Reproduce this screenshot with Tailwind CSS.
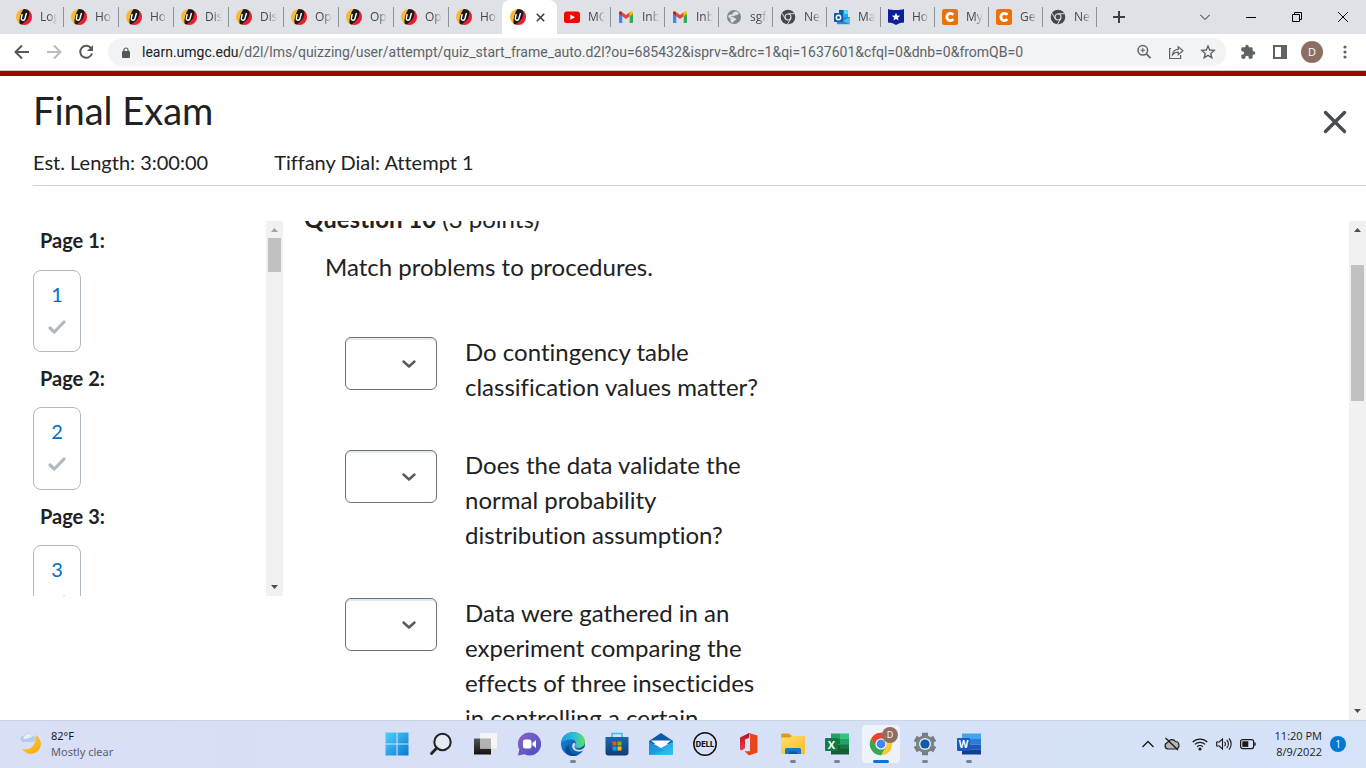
<!DOCTYPE html>
<html lang="en">
<head>
<meta charset="utf-8">
<title>Final Exam</title>
<script src="https://cdn.jsdelivr.net/npm/@tailwindcss/browser@4"></script>
</head>
<body class="flex h-screen flex-col overflow-hidden bg-white font-['Lato',sans-serif] text-[#202122] [font-variant-ligatures:none]">

<svg class="absolute size-0" aria-hidden="true">
  <defs>
    <clipPath id="disc"><circle cx="8" cy="8" r="8"/></clipPath>
    <linearGradient id="winG" x1="0" y1="0" x2="1" y2="1"><stop offset="0" stop-color="#4fd0fb"/><stop offset="1" stop-color="#0a78d2"/></linearGradient>
    <linearGradient id="chatG" x1="0" y1="0" x2="1" y2="1"><stop offset="0" stop-color="#8a63c9"/><stop offset="1" stop-color="#4a4fbd"/></linearGradient>
    <linearGradient id="edgeA" x1="0" y1="0" x2="1" y2="0"><stop offset="0" stop-color="#1b9de2"/><stop offset=".6" stop-color="#2fc2cf"/><stop offset="1" stop-color="#66e04f"/></linearGradient>
    <linearGradient id="edgeB" x1="0" y1="0" x2="1" y2="1"><stop offset="0" stop-color="#1288dc"/><stop offset="1" stop-color="#0f4f9e"/></linearGradient>
    <linearGradient id="storeG" x1="0" y1="0" x2="0" y2="1"><stop offset="0" stop-color="#1668b4"/><stop offset="1" stop-color="#173c6f"/></linearGradient>
    <linearGradient id="mailG" x1="0" y1="0" x2="1" y2="1"><stop offset="0" stop-color="#1a8fdc"/><stop offset="1" stop-color="#35c3f2"/></linearGradient>
    <linearGradient id="foldG" x1="0" y1="0" x2="1" y2="1"><stop offset="0" stop-color="#ffdf70"/><stop offset="1" stop-color="#fabb25"/></linearGradient>
    <linearGradient id="offG" x1="0" y1="0" x2="0" y2="1"><stop offset="0" stop-color="#b3121d"/><stop offset="1" stop-color="#e8404a"/></linearGradient>
    <linearGradient id="moonG" x1="0" y1="0" x2="1" y2="1"><stop offset="0" stop-color="#ffd23d"/><stop offset="1" stop-color="#f9a60e"/></linearGradient>
    <linearGradient id="darkG" x1="0" y1="0" x2="0" y2="1"><stop offset="0" stop-color="#555"/><stop offset="1" stop-color="#111"/></linearGradient>
    <symbol id="umgc" viewBox="0 0 16 16">
      <g clip-path="url(#disc)">
        <path fill="#fbb831" d="M0 0h16v16H0z"/>
        <path fill="#ee1c3a" d="M13 3 16 1v15H6l2-3c3-1 5-5 5-10z"/>
        <path fill="#1d1a19" d="M7.500 0 13 0 13.500 3c0 5-2 8.500-5.500 10.500L5.500 16 3.500 15C3 10 4.500 4 7.500 0z"/>
        <path fill="none" stroke="#fff" stroke-width="1.400" d="M6.200 5 5.300 9.300c-.3 2.200 3 2.800 3.600.5L10.500 4"/>
      </g>
    </symbol>
    <symbol id="youtube" viewBox="0 0 16 16"><rect y="2.500" width="16" height="11.500" rx="2.500" fill="#f00"/><path fill="#fff" d="M6.300 5.600 11 8.200l-4.700 2.600z"/></symbol>
    <symbol id="gmail" viewBox="0 0 16 16">
      <path fill="#4285f4" d="M1 3.500v9.500q0 1 1 1h2.300V6.500z"/><path fill="#34a853" d="M15 3.500v9.500q0 1-1 1h-2.300V6.500z"/>
      <path fill="#ea4335" d="M4.300 3.300 8 6.100l3.700-2.800v4L8 10.100 4.300 7.300z"/>
      <path fill="#c5221f" d="M1 4.800V3.700C1 2 2.800 1.500 4.300 3.300v4z"/><path fill="#fbbc04" d="M15 4.800V3.700C15 2 13.200 1.500 11.700 3.300v4z"/>
    </symbol>
    <symbol id="globe" viewBox="0 0 16 16"><circle cx="8" cy="8" r="7" fill="#80868b"/><path fill="#dee1e6" d="M7 3.500 10 2.300l3 1.700c-.5 2-1.500 1.300-2.500 2-.5.800-2 0-2.500 1.200H4.500c.5 1 2.500.6 3.500 1.400.3 1.200 2.300.4 2 1.700-.6 1.700-2.500 1.400-3 3.400L4.500 13V9.600L2.200 8l.5-2c1.500-.5 3-.3 4-1z"/></symbol>
    <symbol id="chromeGrey" viewBox="0 0 16 16"><circle cx="8" cy="8" r="7.300" fill="#44484c"/><path stroke="#dee1e6" stroke-width="1" fill="none" d="M8 4.700h6.500M5.200 9.700 2 4.200M10.800 9.700 7.600 15"/><circle cx="8" cy="8" r="3.500" fill="#dee1e6"/><circle cx="8" cy="8" r="2.400" fill="#44484c"/></symbol>
    <symbol id="outlook" viewBox="0 0 16 16"><path fill="#28a8ea" d="M5 1h9v8H5z"/><path fill="#50d9ff" d="M9.500 1H14v4H9.500z"/><path fill="#0f5fae" d="M5 1h4.500v4H5z"/><path fill="#1490df" d="M3 8h13v7.200H3z"/><path fill="#50b8f5" d="m16 8-7 4 7 3.200z"/><rect y="4" width="9" height="9" rx=".8" fill="#0f5ca8"/><circle cx="4.500" cy="8.500" r="2.200" fill="none" stroke="#fff" stroke-width="1.400"/></symbol>
    <symbol id="shield" viewBox="0 0 16 16"><path fill="#0b1e9b" d="M0 0c2 1 4 .5 5.500 1h5C12 .5 14 1 16 0v13.500L12 14l-4 2-4-2-4-.5z"/><path fill="#fff" d="m8 3.800 1.200 2.700 2.900.3-2.200 1.900.7 2.900L8 10.100l-2.600 1.500.7-2.900-2.200-1.900 2.900-.3z"/></symbol>
    <symbol id="chegg" viewBox="0 0 16 16"><rect width="16" height="16" rx="2.500" fill="#eb7100"/><path fill="none" stroke="#fff" stroke-width="2.800" d="M11.300 5.800A3.600 3.600 0 1 0 11.300 10.200"/></symbol>
    <symbol id="check" viewBox="0 0 18 14"><path fill="none" stroke="#b1b9be" stroke-width="3.200" stroke-linecap="round" stroke-linejoin="round" d="m2 8 4.300 4L16 2"/></symbol>
    <symbol id="chev" viewBox="0 0 16 10"><path fill="none" stroke="#565a5c" stroke-width="2.400" stroke-linecap="round" stroke-linejoin="round" d="m2.500 2.500 5.500 5 5.500-5"/></symbol>
    <symbol id="up" viewBox="0 0 7 4"><path fill="currentColor" d="M3.500 0 7 4H0z"/></symbol>
    <symbol id="down" viewBox="0 0 7 4"><path fill="currentColor" d="M0 0h7L3.500 4z"/></symbol>
  </defs>
</svg>

<!-- Tab strip -->
<header class="shrink-0 font-['Open_Sans','Noto_Sans',sans-serif]">
  <div class="flex h-[34px] items-center bg-[#dee1e6] pl-[9px] text-xs text-[#45494d]">
    <nav id="tabs" class="flex h-full items-center" aria-label="Tabs"></nav>
    <button class="ml-4 size-3" aria-label="New tab"><svg viewBox="0 0 12 12" class="size-3"><path d="M6 0v12M0 6h12" stroke="#3c4043" stroke-width="2"/></svg></button>
    <div class="ml-auto flex h-7 items-center">
      <button class="grid h-full w-[46px] place-items-center" aria-label="Search tabs"><svg viewBox="0 0 10 6" class="h-[6px] w-[10px]"><path d="m0 .5 5 5 5-5" fill="none" stroke="#222"/></svg></button>
      <button class="grid h-full w-[46px] place-items-center" aria-label="Minimize"><svg viewBox="0 0 10 10" class="size-[10px]"><path d="M0 5.500h10" stroke="#000"/></svg></button>
      <button class="grid h-full w-[46px] place-items-center" aria-label="Restore"><svg viewBox="0 0 10 10" class="size-[10px]"><path d="M.5 2.500h7v7h-7zM2.500 2.500v-2h7v7h-2" fill="none" stroke="#000"/></svg></button>
      <button class="grid h-full w-[46px] place-items-center" aria-label="Close window"><svg viewBox="0 0 10 10" class="size-[10px]"><path d="m0 0 10 10M10 0 0 10" stroke="#000"/></svg></button>
    </div>
  </div>

  <!-- Toolbar -->
  <div class="flex h-9 items-center bg-white pr-[13px] pl-[14px] text-[#5f6368]">
    <button class="mr-4 size-4" aria-label="Back"><svg viewBox="0 0 16 16" class="size-4" fill="none" stroke="#55595d" stroke-width="2"><path d="M15 8H2M8 1.500 1.500 8 8 14.500"/></svg></button>
    <button class="mr-4 size-4" aria-label="Forward"><svg viewBox="0 0 16 16" class="size-4" fill="none" stroke="#babcbe" stroke-width="2"><path d="M1 8h13M8 1.500 14.500 8 8 14.500"/></svg></button>
    <button class="mr-[14px] size-4" aria-label="Reload"><svg viewBox="0 0 16 16" class="size-4"><path d="M13.300 4.500A6 6 0 1 0 14 9.500" fill="none" stroke="#55595d" stroke-width="2"/><path d="M15 1v6H9z" fill="#55595d"/></svg></button>
    <div class="flex h-7 min-w-0 flex-1 items-center rounded-full bg-[#f1f3f4] px-[14px]">
      <svg viewBox="0 0 8 11" class="h-[11px] w-2 shrink-0"><rect y="4" width="8" height="7" rx="1" fill="#55595d"/><path d="M2 4.500V3a2 2 0 0 1 4 0v1.500" fill="none" stroke="#55595d" stroke-width="1.200"/></svg>
      <div class="ml-3 min-w-0 flex-1 overflow-hidden font-['Roboto',sans-serif] text-sm whitespace-nowrap"><span class="text-[#202124]">learn.umgc.edu</span>/d2l/lms/quizzing/user/attempt/quiz_start_frame_auto.d2l?ou=685432&amp;isprv=&amp;drc=1&amp;qi=1637601&amp;cfql=0&amp;dnb=0&amp;fromQB=0</div>
      <button class="mr-4 size-4" aria-label="Zoom"><svg viewBox="0 0 16 16" class="size-4" fill="none" stroke="#5f6368" stroke-width="1.500"><circle cx="6.800" cy="6.300" r="4.800"/><path d="m10.500 10 4 4.200" stroke-width="1.800"/><path d="M4.500 6.300h4.600M6.800 4v4.600" stroke-width="1.100"/></svg></button>
      <button class="mr-4 size-4" aria-label="Share"><svg viewBox="0 0 16 16" class="size-4" fill="none" stroke="#5f6368" stroke-width="1.200"><path d="M3 4.500H1.600v10h11V11"/><path d="M4.500 10.800C5 7.500 7 5.500 10.200 5.400V2.700L15 6.800l-4.800 4V8.200C7.800 8.200 6 9 4.500 10.800z"/></svg></button>
      <button class="-mr-[4px] size-4" aria-label="Bookmark"><svg viewBox="0 0 16 16" class="size-4" fill="none" stroke="#5f6368" stroke-width="1.400"><path d="m8 2 1.700 4 4.500.4-3.400 3 1 4.300L8 11.400l-3.800 2.300 1-4.300-3.400-3L6.300 6z"/></svg></button>
    </div>
    <button class="ml-[14px] size-4" aria-label="Extensions"><svg viewBox="0 0 24 24" class="size-4" fill="#5f6368"><path d="M20.500 11H19V7a2 2 0 0 0-2-2h-4V3.500a2.500 2.500 0 0 0-5 0V5H4a2 2 0 0 0-2 2v3.800h1.500a2.700 2.700 0 0 1 0 5.400H2V20a2 2 0 0 0 2 2h3.800v-1.500a2.700 2.700 0 0 1 5.400 0V22H17a2 2 0 0 0 2-2v-4h1.500a2.500 2.500 0 0 0 0-5z"/></svg></button>
    <button class="ml-4 size-4" aria-label="Side panel"><svg viewBox="0 0 16 16" class="size-4"><path fill="#5f6368" fill-rule="evenodd" d="M1 1h14v14H1zm2 2v10h6V3z"/></svg></button>
    <button class="ml-[13px] size-[22px] rounded-full bg-[#8d6e63] text-[11px] leading-[22px] text-white" aria-label="Profile">D</button>
    <button class="ml-[14px] size-4" aria-label="Menu"><svg viewBox="0 0 16 16" class="size-4" fill="#5f6368"><circle cx="8" cy="3" r="1.600"/><circle cx="8" cy="8" r="1.600"/><circle cx="8" cy="13" r="1.600"/></svg></button>
  </div>
</header>

<!-- Quiz page -->
<div class="h-[6px] shrink-0 border-t border-[#c9cbcd] bg-[#9e0505]"></div>
<section class="ml-[33px] shrink-0 border-b border-[#cdd5dc] pt-[9px] pb-2">
  <div class="flex items-start justify-between pr-[19px]">
    <h1 class="mt-[2px] text-[38px] leading-[46px]">Final Exam</h1>
    <button class="mt-[25px] size-6" aria-label="Close"><svg viewBox="0 0 24 24" class="size-6"><path d="m2.500 2.500 19 19M21.500 2.500l-19 19" stroke="#494c4e" stroke-width="3.400" stroke-linecap="round"/></svg></button>
  </div>
  <div class="flex gap-[66px] pt-[13px] text-[20px] leading-[30px]">
    <p>Est. Length: 3:00:00</p>
    <p>Tiffany Dial: Attempt 1</p>
  </div>
</section>

<main class="flex min-h-0 flex-1 pt-[35px]">
  <aside class="ml-[33px] flex h-[375px] w-[250px] shrink-0 overflow-hidden">
    <div class="flex-1 text-[20px]">
      <h2 class="pt-1 pl-[7px] leading-[30px] font-bold">Page 1:</h2>
      <a href="#q1" class="mt-[15px] flex h-[82px] w-12 flex-col items-center rounded-lg border border-[#b1b9be] pt-2 leading-[30px] text-[#006fbf]">1<svg class="mt-[11px] h-[14px] w-[18px]"><use href="#check"/></svg></a>
      <h2 class="mt-[11px] pl-[7px] leading-[30px] font-bold">Page 2:</h2>
      <a href="#q2" class="mt-[14px] flex h-[83px] w-12 flex-col items-center rounded-lg border border-[#b1b9be] pt-2 leading-[30px] text-[#006fbf]">2<svg class="mt-[11px] h-[14px] w-[18px]"><use href="#check"/></svg></a>
      <h2 class="mt-[11px] pl-[7px] leading-[30px] font-bold">Page 3:</h2>
      <a href="#q3" class="mt-[14px] flex h-[83px] w-12 flex-col items-center rounded-lg border border-[#b1b9be] pt-2 leading-[30px] text-[#006fbf]">3<svg class="mt-[11px] h-[14px] w-[18px]"><use href="#check"/></svg></a>
    </div>
    <div class="flex w-[17px] flex-col items-center bg-[#f1f1f1] py-[7px]">
      <svg class="h-1 w-[7px] shrink-0 text-[#a3a3a3]"><use href="#up"/></svg>
      <div class="mt-[6px] h-[34px] w-[13px] bg-[#c1c1c1]"></div>
      <svg class="mt-auto h-1 w-[7px] shrink-0 text-[#505050]"><use href="#down"/></svg>
    </div>
  </aside>

  <div class="flex min-w-0 flex-1 overflow-hidden">
    <div class="min-w-0 flex-1 pl-[21px] text-[24px] leading-[35px]">
      <h2 class="-mt-[20px]"><b>Question 10</b> (3 points)</h2>
      <p class="pt-[13px] pl-[21px]">Match problems to procedures.</p>
      <div class="flex flex-col gap-[43px] pt-[50px] pl-[41px]">
        <div class="flex gap-7">
          <div class="relative mt-[3px] h-[53px] w-[92px] shrink-0"><select aria-labelledby="m1" class="size-full appearance-none rounded-md border border-[#6e7376] bg-white shadow-[inset_0_2px_0_#e3e9f1]"><option></option></select><svg class="pointer-events-none absolute top-[22px] right-5 h-[10px] w-4"><use href="#chev"/></svg></div>
          <p id="m1" class="max-w-[304px]">Do contingency table classification values matter?</p>
        </div>
        <div class="flex gap-7">
          <div class="relative mt-[3px] h-[53px] w-[92px] shrink-0"><select aria-labelledby="m2" class="size-full appearance-none rounded-md border border-[#6e7376] bg-white shadow-[inset_0_2px_0_#e3e9f1]"><option></option></select><svg class="pointer-events-none absolute top-[22px] right-5 h-[10px] w-4"><use href="#chev"/></svg></div>
          <p id="m2" class="max-w-[304px]">Does the data validate the normal probability distribution assumption?</p>
        </div>
        <div class="flex gap-7">
          <div class="relative mt-[3px] h-[53px] w-[92px] shrink-0"><select aria-labelledby="m3" class="size-full appearance-none rounded-md border border-[#6e7376] bg-white shadow-[inset_0_2px_0_#e3e9f1]"><option></option></select><svg class="pointer-events-none absolute top-[22px] right-5 h-[10px] w-4"><use href="#chev"/></svg></div>
          <p id="m3" class="max-w-[304px]">Data were gathered in an experiment comparing the effects of three insecticides in controlling a certain</p>
        </div>
      </div>
    </div>
    <div class="flex w-[17px] shrink-0 flex-col items-center bg-[#f1f1f1] py-[7px]">
      <svg class="h-1 w-[7px] shrink-0 text-[#505050]"><use href="#up"/></svg>
      <div class="mt-[33px] h-[136px] w-[13px] bg-[#c1c1c1]"></div>
      <svg class="mt-auto h-1 w-[7px] shrink-0 text-[#505050]"><use href="#down"/></svg>
    </div>
  </div>
</main>

<!-- Taskbar -->
<footer class="grid h-12 shrink-0 grid-cols-[1fr_auto_1fr] items-center border-t border-[#c9d4e8] bg-linear-to-r from-[#d8dff6] to-[#d5e2f8] pb-px font-['Open_Sans','Noto_Sans',sans-serif] text-[11px] leading-4 text-[#1b1b1b]">
  <div class="flex items-center gap-[9px] pl-5 font-['Noto_Sans',sans-serif]">
    <svg viewBox="0 0 22 24" class="h-6 w-[22px]"><path fill="url(#moonG)" d="M15.500 3A10 10 0 1 1 2 16.500c5 2.500 15 0 13.500-13.500z"/><path fill="#b5cbe9" d="M3.500 10a3 3 0 0 1 .3-6A4.500 4.500 0 0 1 12 4a3 3 0 0 1 .5 6z"/><path fill="#e8f0fb" d="M3.500 7a3 3 0 0 1 1-3A4.500 4.500 0 0 1 12 4c-1 2-5 3-8.500 3z"/></svg>
    <p>82°F<br><span class="text-[#5b6070]">Mostly clear</span></p>
  </div>

  <nav class="flex h-full items-center" aria-label="Taskbar">
    <button class="grid h-full w-11 place-items-center" aria-label="Start"><svg viewBox="0 0 24 24" class="size-6"><path fill="url(#winG)" d="M.5.5h11v11H.5zM12.500.5h11v11h-11zM.5 12.500h11v11H.5zM12.500 12.500h11v11h-11z"/></svg></button>
    <button class="grid h-full w-11 place-items-center" aria-label="Search"><svg viewBox="0 0 24 24" class="size-6" fill="none" stroke="#222"><circle cx="13.500" cy="10" r="8.200" stroke-width="2" fill="#e6ebf5"/><path d="M7.800 16 2.500 21.500" stroke-width="2.800" stroke-linecap="round"/></svg></button>
    <button class="grid h-full w-11 place-items-center" aria-label="Task view"><svg viewBox="0 0 24 24" class="size-6"><path fill="url(#darkG)" d="M1 6.500h17v16H1z"/><path fill="#f5f5f5" d="M7 1h17v15.500H7z"/><path fill="#b3b3b3" d="M7 6.500h11v10H7z"/></svg></button>
    <button class="grid h-full w-11 place-items-center" aria-label="Chat"><svg viewBox="0 0 24 24" class="size-6"><path fill="url(#chatG)" d="M12.500.5a11.500 11.500 0 1 1-5 21.800L1 23.500l1.300-6A11.500 11.500 0 0 1 12.500.5z"/><rect x="6" y="7.500" width="8.500" height="9" rx="2" fill="#fff"/><path fill="#fff" d="m15.500 11 3.500-3v8l-3.500-3z"/></svg></button>
    <button class="relative grid h-full w-11 place-items-center" aria-label="Edge"><svg viewBox="0 0 24 24" class="size-6"><circle cx="12" cy="12" r="12" fill="url(#edgeB)"/><path fill="url(#edgeA)" d="M0 11C1 4 6 0 12 0c7 0 12 4.500 12 9.500 0 4-3 6.500-7 6.500-2.500 0-3.500-1-3-2 2-3 .5-6.500-3.500-6.500C6 7.500 1.500 9 0 11z"/><path fill="#0d4a97" d="M8 13c-1 6 4 10 9 9.700-3 1.800-9 2-12-2C3 17 5 14 8 13z"/><path fill="#d8e0f6" d="M14.300 12.500C12 15.500 15 18.300 19 17.800c2-.3 3.500-1.300 5-3v2l-1.300 1.200C20.500 19.800 17.500 20 15 19c-3-1-4-3.500-3.800-5.500.3-1.500 1-2.200 1.800-2.500 1.200 0 1.600.7 1.300 1.500z"/></svg><i class="absolute bottom-1 h-[3px] w-[6px] rounded-full bg-[#7b8190]"></i></button>
    <button class="grid h-full w-11 place-items-center" aria-label="Store"><svg viewBox="0 0 24 24" class="size-6"><path fill="none" stroke="#38bdf0" stroke-width="1.600" d="M7 6V1.500h10V6"/><path fill="url(#storeG)" d="M.5 5h23v15.500a3 3 0 0 1-3 3h-17a3 3 0 0 1-3-3z"/><path fill="#f25022" d="M7.500 9.500h4v4h-4z"/><path fill="#7fba00" d="M12.500 9.500h4v4h-4z"/><path fill="#00a4ef" d="M7.500 14.500h4v4h-4z"/><path fill="#ffb900" d="M12.500 14.500h4v4h-4z"/></svg></button>
    <button class="grid h-full w-11 place-items-center" aria-label="Mail"><svg viewBox="0 0 24 24" class="size-6"><path fill="#0d5ba8" d="M0 9 12 1l12 8v3H0z"/><path fill="#fff" d="M2 8.500h20L12 17z"/><path fill="url(#mailG)" d="M0 9.500 12 16l12-6.500V23H0z"/><path fill="#1381d2" d="m0 9.500 16 9L0 23z" opacity=".35"/></svg></button>
    <button class="grid h-full w-11 place-items-center" aria-label="Dell"><svg viewBox="0 0 24 24" class="size-6"><circle cx="12" cy="12" r="11.200" fill="none" stroke="#111" stroke-width="1.500"/><text x="12" y="14.800" text-anchor="middle" font-family="Inter, sans-serif" font-weight="800" font-size="7.500" fill="#111">DELL</text></svg></button>
    <button class="grid h-full w-11 place-items-center" aria-label="Office"><svg viewBox="0 0 24 24" class="size-6"><path fill="url(#offG)" d="M3 5.500 12 1v5L8 7.500v8.700L4.800 18.500 3 17.500z"/><path fill="#e8471b" d="m12 1 8.500 2.500v17L12 23.500l-4.500-4.300H13V5z"/></svg></button>
    <button class="relative grid h-full w-11 place-items-center" aria-label="File Explorer"><svg viewBox="0 0 24 24" class="size-6"><path fill="#dd9d10" d="M0 3q0-1.500 1.500-1.500H8L11 4h11.500Q24 4 24 5.500V9H0z"/><path fill="url(#foldG)" d="M0 5.500h9l2-1.500h11.500Q24 4 24 5.500V22H0z"/><path fill="#1477cf" d="M4 22v-4.500Q4 16 5.500 16h13q1.500 0 1.500 1.500V22z"/><path fill="#0b559f" d="M8 19.500h8V22H8z"/></svg><i class="absolute bottom-1 h-[3px] w-[6px] rounded-full bg-[#7b8190]"></i></button>
    <button class="relative grid h-full w-11 place-items-center" aria-label="Excel"><svg viewBox="0 0 24 24" class="size-6"><path fill="#21a366" d="M6 1.500h9V7H6z"/><path fill="#33c481" d="M15 1.500h9V7h-9z"/><path fill="#107c41" d="M6 7h9v5.500H6z"/><path fill="#21a366" d="M15 7h9v5.500h-9z"/><path fill="#185c37" d="M6 12.500h18v10H6z"/><path fill="#107c41" d="M15 12.500h9V17h-9z"/><rect y="6" width="13" height="13" rx="1" fill="#107c41"/><text x="6.500" y="16.500" text-anchor="middle" font-family="Open Sans, sans-serif" font-weight="700" font-size="11" fill="#fff">X</text></svg><i class="absolute bottom-1 h-[3px] w-[6px] rounded-full bg-[#7b8190]"></i></button>
    <button class="relative grid h-full w-11 place-items-center" aria-label="Chrome"><span class="absolute inset-x-[3px] top-1 bottom-1 rounded bg-[#edf2fc]"></span><svg viewBox="0 0 24 24" class="relative size-6"><circle cx="12" cy="12" r="11.200" fill="#fcc934"/><path fill="#ea4335" d="M2.300 6.400A11.200 11.200 0 0 1 21.700 6.400H12L7 14.800z"/><path fill="#34a853" d="M2.300 6.400 7.200 14.800 12 17.600 16.800 14.800 12 23.200A11.200 11.200 0 0 1 2.300 6.400z"/><circle cx="12" cy="12" r="5.600" fill="#fff"/><circle cx="12" cy="12" r="4.400" fill="#4285f4"/></svg><span class="absolute top-[6px] right-[5px] size-4 rounded-full bg-[#8d6e63] text-center text-[9px] leading-4 text-white">D</span><i class="absolute bottom-1 h-[3px] w-4 rounded-full bg-[#0078d4]"></i></button>
    <button class="relative grid h-full w-11 place-items-center" aria-label="Settings"><svg viewBox="0 0 24 24" class="size-6"><g stroke="#747b82" stroke-width="6"><path d="M12 .8v22.400M2.300 6.400l19.400 11.200M21.700 6.400 2.300 17.600"/></g><circle cx="12" cy="12" r="9" fill="#7b8289"/><circle cx="12" cy="12" r="6" fill="#dfe6ef"/><circle cx="12" cy="12" r="4.600" fill="#0d5ca9"/></svg><i class="absolute bottom-1 h-[3px] w-[6px] rounded-full bg-[#7b8190]"></i></button>
    <button class="relative grid h-full w-11 place-items-center" aria-label="Word"><svg viewBox="0 0 24 24" class="size-6"><path fill="#41a5ee" d="M5 1.500h19V7H5z"/><path fill="#2b7cd3" d="M5 7h19v5.500H5z"/><path fill="#185abd" d="M5 12.500h19v5H5z"/><path fill="#103f91" d="M5 17.500h19v5H5z"/><rect y="6" width="13" height="13" rx="1" fill="#185abd"/><text x="6.500" y="16.200" text-anchor="middle" font-family="Open Sans, sans-serif" font-weight="700" font-size="10" fill="#fff">W</text></svg><i class="absolute bottom-1 h-[3px] w-[6px] rounded-full bg-[#7b8190]"></i></button>
  </nav>

  <div class="flex items-center justify-end pr-5">
    <svg viewBox="0 0 12 8" class="mr-[10px] h-2 w-3"><path d="m.5 7 5.500-5.500L11.500 7" fill="none" stroke="#1b1b1b" stroke-width="1.300"/></svg>
    <svg viewBox="0 0 16 14" class="mr-3 h-[14px] w-4"><path d="M4 12a3.300 3.300 0 0 1-.3-6.500A4.500 4.500 0 0 1 11.500 4.500 3.800 3.800 0 0 1 12 12z" fill="#b5b5b5" stroke="#1b1b1b" stroke-width="1.200"/><path d="m1.500 1 12.500 12" stroke="#1b1b1b" stroke-width="1.300"/></svg>
    <svg viewBox="0 0 16 14" class="mr-2 h-[14px] w-4" fill="none" stroke="#1b1b1b" stroke-width="1.200"><path d="M.7 5a10.500 10.500 0 0 1 14.600 0M2.900 7.400a7.300 7.300 0 0 1 10.200 0M5.200 9.700a4 4 0 0 1 5.600 0"/><circle cx="8" cy="12" r="1" fill="#1b1b1b"/></svg>
    <svg viewBox="0 0 16 14" class="mr-2 h-[14px] w-4" fill="none" stroke="#1b1b1b" stroke-width="1.100"><path d="M.7 5h2.500l3.300-3v10L3.200 9H.7zM8.500 4.800a3 3 0 0 1 0 4.400M10.700 3a5.500 5.500 0 0 1 0 8M13 1.500a8 8 0 0 1 0 11"/></svg>
    <svg viewBox="0 0 16 14" class="mr-[19px] h-[14px] w-4"><rect x=".6" y="2.600" width="13" height="9" rx="2" fill="none" stroke="#1b1b1b" stroke-width="1.200"/><rect x="2.300" y="4.300" width="6" height="5.600" fill="#1b1b1b"/><path d="M14.300 5.500h1.400v3.200h-1.400z" fill="#1b1b1b"/></svg>
    <p class="text-right">11:20 PM<br>8/9/2022</p>
    <span class="ml-2 size-4 rounded-full bg-[#0078d4] text-center text-[10px] text-white">1</span>
  </div>
</footer>

<script>
  const base = "flex h-5 shrink-0 items-center pl-[7px] ";
  const early = base + "w-[55px] border-r border-[#8d9196]";
  const beforeActive = base + "w-[53px]";
  const late = base + "w-[54px] border-r border-[#8d9196]";
  const tabs = [
    ["umgc", "Log", early], ["umgc", "Ho", early], ["umgc", "Ho", early], ["umgc", "Dis", early],
    ["umgc", "Dis", early], ["umgc", "Op", early], ["umgc", "Op", early], ["umgc", "Op", early],
    ["umgc", "Ho", beforeActive], null,
    ["youtube", "MG", late], ["gmail", "Inb", late], ["gmail", "Inb", late], ["globe", "sgf", late],
    ["chromeGrey", "Ne", late], ["outlook", "Ma", late], ["shield", "Ho", late], ["chegg", "My", late],
    ["chegg", "Ge", late], ["chromeGrey", "Ne", late]
  ];
  document.getElementById("tabs").innerHTML = tabs.map(t => t
    ? `<a href="#" class="${t[2]}"><svg class="size-4 shrink-0"><use href="#${t[0]}"/></svg><span class="ml-2 w-[17px] overflow-hidden whitespace-nowrap mask-r-from-50%">${t[1]}</span></a>`
    : `<div class="flex h-full w-[55px] shrink-0 items-center rounded-t-lg bg-white pl-2"><svg class="size-4"><use href="#umgc"/></svg><button class="ml-[10px] size-[9px]" aria-label="Close tab"><svg viewBox="0 0 9 9" class="size-[9px]"><path d="m.8.8 7.400 7.400M8.200.8.8 8.200" stroke="#3c4043" stroke-width="1.600"/></svg></button></div>`
  ).join("");
</script>
</body>
</html>
